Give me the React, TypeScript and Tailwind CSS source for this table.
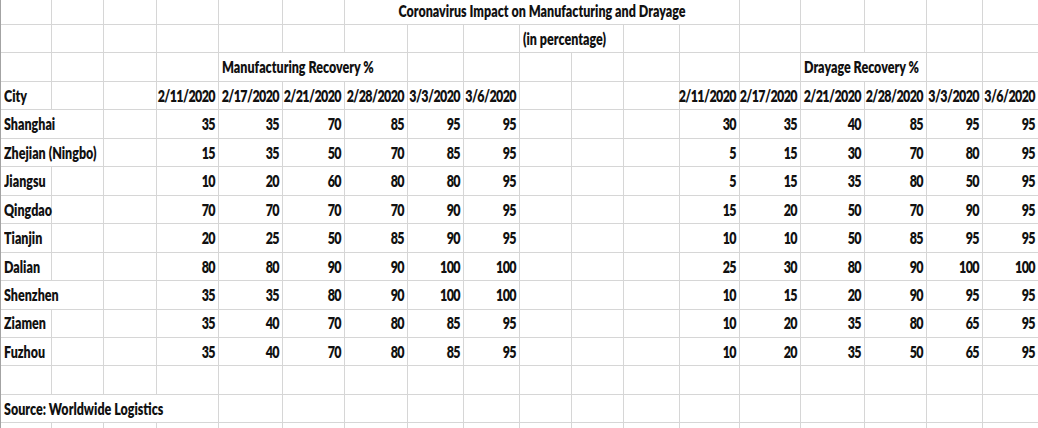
import React from "react";

// Types:
type Align = "left" | "right" | "center";

interface Cell {
    text?: string;
    span?: number;
    align?: Align;
}


// --------------- DATA ---------------
const DATES = ["2/11/2020", "2/17/2020", "2/21/2020", "2/28/2020", "3/3/2020", "3/6/2020"];

const CITIES: { name: string; span: number; manufacturing: number[]; drayage: number[] }[] = [
    { name: "Shanghai", span: 2, manufacturing: [35, 35, 70, 85, 95, 95], drayage: [30, 35, 40, 85, 95, 95] },
    { name: "Zhejian (Ningbo)", span: 2, manufacturing: [15, 35, 50, 70, 85, 95], drayage: [5, 15, 30, 70, 80, 95] },
    { name: "Jiangsu", span: 1, manufacturing: [10, 20, 60, 80, 80, 95], drayage: [5, 15, 35, 80, 50, 95] },
    { name: "Qingdao", span: 1, manufacturing: [70, 70, 70, 70, 90, 95], drayage: [15, 20, 50, 70, 90, 95] },
    { name: "Tianjin", span: 1, manufacturing: [20, 25, 50, 85, 90, 95], drayage: [10, 10, 50, 85, 95, 95] },
    { name: "Dalian", span: 1, manufacturing: [80, 80, 90, 90, 100, 100], drayage: [25, 30, 80, 90, 100, 100] },
    { name: "Shenzhen", span: 2, manufacturing: [35, 35, 80, 90, 100, 100], drayage: [10, 15, 20, 90, 95, 95] },
    { name: "Ziamen", span: 1, manufacturing: [35, 40, 70, 80, 85, 95], drayage: [10, 20, 35, 80, 65, 95] },
    { name: "Fuzhou", span: 1, manufacturing: [35, 40, 70, 80, 85, 95], drayage: [10, 20, 35, 50, 65, 95] },
];

const SPAN_CLASS: Record<number, string> = {
    1: "col-span-1",
    2: "col-span-2",
    3: "col-span-3",
    4: "col-span-4",
    7: "col-span-7",
};

const ALIGN_CLASS: Record<Align, string> = {
    left: "justify-start",
    right: "justify-end",
    center: "justify-center",
};

const empty = (n: number): Cell[] => Array.from({ length: n }, () => ({}));
const right = (values: (string | number)[]): Cell[] => values.map((v) => ({ text: String(v), align: "right" as Align }));


// --------------- ROWS ---------------
const ROWS: Cell[][] = [
    [...empty(6), { text: "Coronavirus Impact on Manufacturing and Drayage", span: 7, align: "center" }, ...empty(5)],
    [...empty(9), { text: "(in percentage)", span: 2 }, ...empty(7)],
    [...empty(4), { text: "Manufacturing Recovery %", span: 3 }, ...empty(7), { text: "Drayage Recovery %", span: 2 }, ...empty(2)],
    [{ text: "City" }, ...empty(2), ...right(DATES), ...empty(3), ...right(DATES)],
    ...CITIES.map((CITY) => [
        { text: CITY.name, span: CITY.span },
        ...empty(3 - CITY.span),
        ...right(CITY.manufacturing),
        ...empty(3),
        ...right(CITY.drayage),
    ]),
    empty(18),
    [{ text: "Source: Worldwide Logistics", span: 4 }, ...empty(14)],
    empty(18),
];


// --------------- MODULE ---------------
function App() {
    return (
        <div className="w-[1038px] h-[428px] overflow-hidden bg-white border-l border-[#a3a3a3] font-['Lato',sans-serif] font-extrabold text-[12.5px] text-[#111]">
            <div className="grid w-[1037px] grid-cols-[51px_52px_53px_62px_64px_62px_63px_56px_56px_52px_52px_56px_60px_61px_64px_62px_56px_55px] grid-rows-[25px_repeat(14,28.46px)_20px]">
                {
                    ROWS.map((ROW, rowIdx) =>
                        ROW.map((CELL, cellIdx) => {
                            // La última columna no muestra línea a la derecha (queda fuera de la captura).
                            const isLast = cellIdx === ROW.length - 1;

                            return (
                                <div
                                    key={rowIdx + "-" + cellIdx}
                                    className={`${SPAN_CLASS[CELL.span ?? 1]} ${ALIGN_CLASS[CELL.align ?? "left"]} ${isLast ? "border-r-0" : "border-r"} flex items-end px-[3px] pb-1 border-b border-[#d6d6d6] overflow-visible`}
                                >
                                    {
                                        CELL.text && (
                                            <span className={`${CELL.align === "right" ? "tracking-[-0.6px]" : "tracking-normal"} inline-block origin-bottom scale-y-[1.3] leading-none whitespace-nowrap`}>
                                                {CELL.text}
                                            </span>
                                        )
                                    }
                                </div>
                            );
                        })
                    )
                }
            </div>
        </div>
    );
};


export default App;
